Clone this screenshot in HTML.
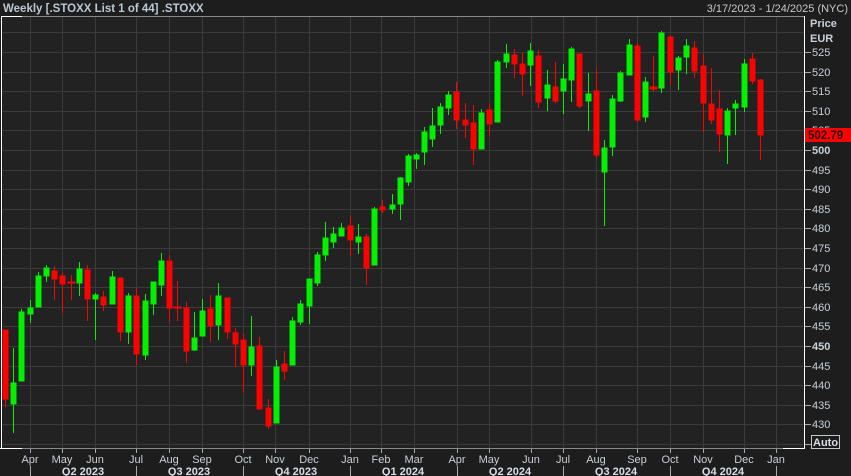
<!DOCTYPE html>
<html><head><meta charset="utf-8"><style>
html,body{margin:0;padding:0;background:#1d1d1d;width:851px;height:476px;overflow:hidden}
svg{display:block;font-family:"Liberation Sans",Arial,sans-serif}
</style></head><body>
<svg width="851" height="476" viewBox="0 0 851 476">
<rect x="0" y="0" width="851" height="476" fill="#1d1d1d"/>
<rect x="1" y="16" width="804" height="432" fill="#222222"/>
<g stroke="#3b3b3b" stroke-width="1">
<line x1="1" x2="804" y1="32.5" y2="32.5"/><line x1="1" x2="804" y1="52.5" y2="52.5"/><line x1="1" x2="804" y1="72.5" y2="72.5"/><line x1="1" x2="804" y1="91.5" y2="91.5"/><line x1="1" x2="804" y1="111.5" y2="111.5"/><line x1="1" x2="804" y1="130.5" y2="130.5"/><line x1="1" x2="804" y1="150.5" y2="150.5"/><line x1="1" x2="804" y1="170.5" y2="170.5"/><line x1="1" x2="804" y1="189.5" y2="189.5"/><line x1="1" x2="804" y1="209.5" y2="209.5"/><line x1="1" x2="804" y1="228.5" y2="228.5"/><line x1="1" x2="804" y1="248.5" y2="248.5"/><line x1="1" x2="804" y1="268.5" y2="268.5"/><line x1="1" x2="804" y1="287.5" y2="287.5"/><line x1="1" x2="804" y1="307.5" y2="307.5"/><line x1="1" x2="804" y1="326.5" y2="326.5"/><line x1="1" x2="804" y1="346.5" y2="346.5"/><line x1="1" x2="804" y1="366.5" y2="366.5"/><line x1="1" x2="804" y1="385.5" y2="385.5"/><line x1="1" x2="804" y1="405.5" y2="405.5"/><line x1="1" x2="804" y1="424.5" y2="424.5"/><line x1="1" x2="804" y1="444.5" y2="444.5"/>
<line y1="16" y2="448" x1="30.5" x2="30.5"/><line y1="16" y2="448" x1="62.5" x2="62.5"/><line y1="16" y2="448" x1="95.5" x2="95.5"/><line y1="16" y2="448" x1="136.5" x2="136.5"/><line y1="16" y2="448" x1="169.5" x2="169.5"/><line y1="16" y2="448" x1="202.5" x2="202.5"/><line y1="16" y2="448" x1="243.5" x2="243.5"/><line y1="16" y2="448" x1="275.5" x2="275.5"/><line y1="16" y2="448" x1="309.5" x2="309.5"/><line y1="16" y2="448" x1="350.5" x2="350.5"/><line y1="16" y2="448" x1="381.5" x2="381.5"/><line y1="16" y2="448" x1="414.5" x2="414.5"/><line y1="16" y2="448" x1="457.5" x2="457.5"/><line y1="16" y2="448" x1="489.5" x2="489.5"/><line y1="16" y2="448" x1="531.5" x2="531.5"/><line y1="16" y2="448" x1="563.5" x2="563.5"/><line y1="16" y2="448" x1="596.5" x2="596.5"/><line y1="16" y2="448" x1="637.5" x2="637.5"/><line y1="16" y2="448" x1="670.5" x2="670.5"/><line y1="16" y2="448" x1="703.5" x2="703.5"/><line y1="16" y2="448" x1="744.5" x2="744.5"/><line y1="16" y2="448" x1="776.5" x2="776.5"/>
</g>
<!-- borders -->
<line x1="1" x2="805" y1="16.5" y2="16.5" stroke="#8a8a8a"/>
<line x1="1" x2="805" y1="448.5" y2="448.5" stroke="#8a8a8a"/>
<line x1="1" x2="22" y1="16.5" y2="16.5" stroke="#fff"/>
<line x1="0" x2="22" y1="448.5" y2="448.5" stroke="#fff"/>
<line x1="783" x2="805" y1="448.5" y2="448.5" stroke="#fff"/>
<line x1="1.5" x2="1.5" y1="16" y2="449" stroke="#fff"/>
<line x1="804.5" x2="804.5" y1="16" y2="449" stroke="#fff"/>
<g stroke-width="1">
<g fill="#ff0000" stroke="#ff0000">
<line x1="5.5" x2="5.5" y1="330" y2="407"/><rect x="3" y="330" width="5" height="69"/>
<line x1="54.5" x2="54.5" y1="266" y2="300"/><rect x="52" y="271" width="5" height="8"/>
<line x1="62.5" x2="62.5" y1="273" y2="313"/><rect x="60" y="276" width="5" height="8"/>
<line x1="71.5" x2="71.5" y1="275" y2="300"/><rect x="68" y="282" width="7" height="1"/>
<line x1="87.5" x2="87.5" y1="265" y2="321"/><rect x="85" y="270" width="5" height="29"/>
<line x1="103.5" x2="103.5" y1="291" y2="311"/><rect x="101" y="297" width="5" height="8"/>
<line x1="120.5" x2="120.5" y1="278" y2="341"/><rect x="118" y="278" width="5" height="54"/>
<line x1="136.5" x2="136.5" y1="288" y2="365"/><rect x="134" y="296" width="5" height="58"/>
<line x1="169.5" x2="169.5" y1="255" y2="322"/><rect x="167" y="261" width="5" height="47"/>
<line x1="177.5" x2="177.5" y1="281" y2="321"/><rect x="174" y="307" width="7" height="1"/>
<line x1="186.5" x2="186.5" y1="302" y2="363"/><rect x="184" y="308" width="5" height="43"/>
<line x1="210.5" x2="210.5" y1="295" y2="342"/><rect x="208" y="309" width="5" height="17"/>
<line x1="227.5" x2="227.5" y1="298" y2="339"/><rect x="225" y="298" width="5" height="34"/>
<line x1="235.5" x2="235.5" y1="328" y2="367"/><rect x="233" y="333" width="5" height="11"/>
<line x1="243.5" x2="243.5" y1="334" y2="392"/><rect x="241" y="340" width="5" height="25"/>
<line x1="259.5" x2="259.5" y1="337" y2="409"/><rect x="257" y="346" width="5" height="63"/>
<line x1="268.5" x2="268.5" y1="399" y2="429"/><rect x="266" y="408" width="5" height="18"/>
<line x1="284.5" x2="284.5" y1="351" y2="380"/><rect x="282" y="364" width="5" height="7"/>
<line x1="350.5" x2="350.5" y1="216" y2="256"/><rect x="348" y="226" width="5" height="14"/>
<line x1="366.5" x2="366.5" y1="234" y2="285"/><rect x="364" y="237" width="5" height="31"/>
<line x1="382.5" x2="382.5" y1="200" y2="213"/><rect x="380" y="207" width="5" height="3"/>
<line x1="456.5" x2="456.5" y1="82" y2="129"/><rect x="454" y="92" width="5" height="28"/>
<line x1="465.5" x2="465.5" y1="103" y2="138"/><rect x="463" y="120" width="5" height="5"/>
<line x1="473.5" x2="473.5" y1="105" y2="165"/><rect x="471" y="123" width="5" height="26"/>
<line x1="489.5" x2="489.5" y1="104" y2="136"/><rect x="487" y="110" width="5" height="14"/>
<line x1="514.5" x2="514.5" y1="49" y2="78"/><rect x="512" y="55" width="5" height="9"/>
<line x1="522.5" x2="522.5" y1="53" y2="96"/><rect x="520" y="64" width="5" height="10"/>
<line x1="538.5" x2="538.5" y1="50" y2="108"/><rect x="536" y="56" width="5" height="46"/>
<line x1="555.5" x2="555.5" y1="62" y2="103"/><rect x="553" y="87" width="5" height="14"/>
<line x1="579.5" x2="579.5" y1="54" y2="108"/><rect x="577" y="54" width="5" height="52"/>
<line x1="596.5" x2="596.5" y1="68" y2="158"/><rect x="594" y="91" width="5" height="64"/>
<line x1="637.5" x2="637.5" y1="43" y2="122"/><rect x="635" y="46" width="5" height="74"/>
<line x1="653.5" x2="653.5" y1="56" y2="91"/><rect x="650" y="87" width="7" height="2"/>
<line x1="670.5" x2="670.5" y1="35" y2="85"/><rect x="668" y="37" width="5" height="35"/>
<line x1="694.5" x2="694.5" y1="41" y2="78"/><rect x="692" y="48" width="5" height="23"/>
<line x1="703.5" x2="703.5" y1="54" y2="132"/><rect x="701" y="66" width="5" height="37"/>
<line x1="711.5" x2="711.5" y1="68" y2="124"/><rect x="709" y="104" width="5" height="16"/>
<line x1="719.5" x2="719.5" y1="90" y2="152"/><rect x="717" y="109" width="5" height="25"/>
<line x1="752.5" x2="752.5" y1="53" y2="84"/><rect x="750" y="59" width="5" height="22"/>
<line x1="760.5" x2="760.5" y1="79" y2="160"/><rect x="758" y="80" width="5" height="55"/>
</g>
<g fill="#00f000" stroke="#00f000">
<line x1="13.5" x2="13.5" y1="348" y2="433"/><rect x="11" y="383" width="5" height="21"/>
<line x1="21.5" x2="21.5" y1="309" y2="381"/><rect x="19" y="312" width="5" height="69"/>
<line x1="30.5" x2="30.5" y1="300" y2="323"/><rect x="28" y="308" width="5" height="6"/>
<line x1="38.5" x2="38.5" y1="272" y2="307"/><rect x="36" y="276" width="5" height="31"/>
<line x1="46.5" x2="46.5" y1="265" y2="282"/><rect x="44" y="268" width="5" height="8"/>
<line x1="79.5" x2="79.5" y1="262" y2="296"/><rect x="77" y="269" width="5" height="14"/>
<line x1="95.5" x2="95.5" y1="293" y2="340"/><rect x="93" y="295" width="5" height="4"/>
<line x1="112.5" x2="112.5" y1="271" y2="304"/><rect x="110" y="277" width="5" height="27"/>
<line x1="128.5" x2="128.5" y1="293" y2="344"/><rect x="126" y="296" width="5" height="36"/>
<line x1="145.5" x2="145.5" y1="294" y2="360"/><rect x="143" y="301" width="5" height="54"/>
<line x1="153.5" x2="153.5" y1="282" y2="315"/><rect x="151" y="282" width="5" height="22"/>
<line x1="161.5" x2="161.5" y1="253" y2="296"/><rect x="159" y="261" width="5" height="24"/>
<line x1="194.5" x2="194.5" y1="312" y2="351"/><rect x="192" y="338" width="5" height="12"/>
<line x1="202.5" x2="202.5" y1="299" y2="336"/><rect x="200" y="311" width="5" height="25"/>
<line x1="218.5" x2="218.5" y1="283" y2="340"/><rect x="216" y="296" width="5" height="29"/>
<line x1="251.5" x2="251.5" y1="316" y2="376"/><rect x="249" y="347" width="5" height="18"/>
<line x1="276.5" x2="276.5" y1="360" y2="423"/><rect x="274" y="367" width="5" height="56"/>
<line x1="292.5" x2="292.5" y1="317" y2="365"/><rect x="290" y="321" width="5" height="44"/>
<line x1="300.5" x2="300.5" y1="300" y2="325"/><rect x="298" y="304" width="5" height="18"/>
<line x1="309.5" x2="309.5" y1="279" y2="324"/><rect x="307" y="279" width="5" height="27"/>
<line x1="317.5" x2="317.5" y1="252" y2="286"/><rect x="315" y="255" width="5" height="28"/>
<line x1="325.5" x2="325.5" y1="222" y2="261"/><rect x="323" y="238" width="5" height="17"/>
<line x1="333.5" x2="333.5" y1="227" y2="248"/><rect x="331" y="234" width="5" height="8"/>
<line x1="341.5" x2="341.5" y1="223" y2="236"/><rect x="339" y="228" width="5" height="8"/>
<line x1="358.5" x2="358.5" y1="224" y2="254"/><rect x="356" y="237" width="5" height="5"/>
<line x1="374.5" x2="374.5" y1="207" y2="265"/><rect x="372" y="209" width="5" height="56"/>
<line x1="392.5" x2="392.5" y1="194" y2="214"/><rect x="390" y="205" width="5" height="4"/>
<line x1="400.5" x2="400.5" y1="177" y2="220"/><rect x="398" y="178" width="5" height="26"/>
<line x1="408.5" x2="408.5" y1="154" y2="186"/><rect x="406" y="156" width="5" height="26"/>
<line x1="416.5" x2="416.5" y1="153" y2="169"/><rect x="414" y="155" width="5" height="4"/>
<line x1="424.5" x2="424.5" y1="127" y2="165"/><rect x="422" y="132" width="5" height="20"/>
<line x1="432.5" x2="432.5" y1="108" y2="147"/><rect x="430" y="126" width="5" height="13"/>
<line x1="440.5" x2="440.5" y1="103" y2="134"/><rect x="438" y="107" width="5" height="18"/>
<line x1="448.5" x2="448.5" y1="91" y2="115"/><rect x="446" y="95" width="5" height="13"/>
<line x1="481.5" x2="481.5" y1="109" y2="149"/><rect x="479" y="113" width="5" height="36"/>
<line x1="497.5" x2="497.5" y1="60" y2="122"/><rect x="495" y="62" width="5" height="60"/>
<line x1="506.5" x2="506.5" y1="44" y2="68"/><rect x="504" y="54" width="5" height="8"/>
<line x1="530.5" x2="530.5" y1="43" y2="86"/><rect x="528" y="51" width="5" height="14"/>
<line x1="547.5" x2="547.5" y1="70" y2="111"/><rect x="545" y="85" width="5" height="13"/>
<line x1="563.5" x2="563.5" y1="64" y2="114"/><rect x="561" y="79" width="5" height="12"/>
<line x1="571.5" x2="571.5" y1="47" y2="102"/><rect x="569" y="49" width="5" height="31"/>
<line x1="588.5" x2="588.5" y1="73" y2="131"/><rect x="586" y="94" width="5" height="7"/>
<line x1="604.5" x2="604.5" y1="140" y2="226"/><rect x="602" y="148" width="5" height="24"/>
<line x1="612.5" x2="612.5" y1="95" y2="156"/><rect x="610" y="99" width="5" height="48"/>
<line x1="620.5" x2="620.5" y1="71" y2="102"/><rect x="618" y="73" width="5" height="28"/>
<line x1="629.5" x2="629.5" y1="39" y2="75"/><rect x="627" y="45" width="5" height="30"/>
<line x1="645.5" x2="645.5" y1="77" y2="122"/><rect x="643" y="82" width="5" height="35"/>
<line x1="661.5" x2="661.5" y1="31" y2="93"/><rect x="659" y="33" width="5" height="55"/>
<line x1="678.5" x2="678.5" y1="56" y2="90"/><rect x="676" y="58" width="5" height="12"/>
<line x1="686.5" x2="686.5" y1="39" y2="74"/><rect x="684" y="46" width="5" height="11"/>
<line x1="727.5" x2="727.5" y1="108" y2="164"/><rect x="725" y="111" width="5" height="24"/>
<line x1="735.5" x2="735.5" y1="100" y2="135"/><rect x="733" y="104" width="5" height="4"/>
<line x1="744.5" x2="744.5" y1="59" y2="112"/><rect x="742" y="64" width="5" height="43"/>
</g>
</g>
<!-- header -->
<text x="3" y="12" font-size="11.5" font-weight="bold" fill="#b9c7d6">Weekly [.STOXX List 1 of 44] .STOXX</text>
<text x="848" y="12" font-size="11" fill="#c8c8c8" text-anchor="end">3/17/2023 - 1/24/2025 (NYC)</text>
<!-- right axis -->
<g font-size="11" fill="#c8d0d8">
<text x="810" y="27" font-weight="bold">Price</text>
<text x="810" y="42" font-weight="bold">EUR</text>
</g>
<g stroke="#aaa">
<line x1="805" x2="811" y1="52.5" y2="52.5"/><line x1="805" x2="811" y1="72.5" y2="72.5"/><line x1="805" x2="811" y1="91.5" y2="91.5"/><line x1="805" x2="811" y1="111.5" y2="111.5"/><line x1="805" x2="811" y1="130.5" y2="130.5"/><line x1="805" x2="811" y1="150.5" y2="150.5"/><line x1="805" x2="811" y1="170.5" y2="170.5"/><line x1="805" x2="811" y1="189.5" y2="189.5"/><line x1="805" x2="811" y1="209.5" y2="209.5"/><line x1="805" x2="811" y1="228.5" y2="228.5"/><line x1="805" x2="811" y1="248.5" y2="248.5"/><line x1="805" x2="811" y1="268.5" y2="268.5"/><line x1="805" x2="811" y1="287.5" y2="287.5"/><line x1="805" x2="811" y1="307.5" y2="307.5"/><line x1="805" x2="811" y1="326.5" y2="326.5"/><line x1="805" x2="811" y1="346.5" y2="346.5"/><line x1="805" x2="811" y1="366.5" y2="366.5"/><line x1="805" x2="811" y1="385.5" y2="385.5"/><line x1="805" x2="811" y1="405.5" y2="405.5"/><line x1="805" x2="811" y1="424.5" y2="424.5"/><line x1="805" x2="811" y1="444.5" y2="444.5"/>
</g>
<g font-size="11" fill="#c8d0d8">
<text x="812" y="56">525</text><text x="812" y="76">520</text><text x="812" y="95">515</text><text x="812" y="115">510</text><text x="812" y="134">505</text>
<text x="812" y="154" font-weight="bold">500</text><text x="812" y="174">495</text><text x="812" y="193">490</text><text x="812" y="213">485</text><text x="812" y="232">480</text><text x="812" y="252">475</text><text x="812" y="272">470</text><text x="812" y="291">465</text><text x="812" y="311">460</text><text x="812" y="330">455</text>
<text x="812" y="350" font-weight="bold">450</text><text x="812" y="370">445</text><text x="812" y="389">440</text><text x="812" y="409">435</text><text x="812" y="428">430</text>
</g>
<rect x="805" y="128" width="46" height="14" fill="#ff0000"/>
<text x="808" y="139" font-size="11.5" font-weight="bold" fill="#2a0000">502.79</text>
<rect x="811.5" y="435.5" width="28" height="13" fill="none" stroke="#c8c8c8"/>
<text x="813" y="446" font-size="11" font-weight="bold" fill="#d8dde8">Auto</text>
<!-- bottom axis -->
<g stroke="#aaa">
<line x1="30.5" x2="30.5" y1="449" y2="453"/><line x1="62.5" x2="62.5" y1="449" y2="453"/><line x1="95.5" x2="95.5" y1="449" y2="453"/><line x1="136.5" x2="136.5" y1="449" y2="453"/><line x1="169.5" x2="169.5" y1="449" y2="453"/><line x1="202.5" x2="202.5" y1="449" y2="453"/><line x1="243.5" x2="243.5" y1="449" y2="453"/><line x1="275.5" x2="275.5" y1="449" y2="453"/><line x1="309.5" x2="309.5" y1="449" y2="453"/><line x1="350.5" x2="350.5" y1="449" y2="453"/><line x1="381.5" x2="381.5" y1="449" y2="453"/><line x1="414.5" x2="414.5" y1="449" y2="453"/><line x1="457.5" x2="457.5" y1="449" y2="453"/><line x1="489.5" x2="489.5" y1="449" y2="453"/><line x1="531.5" x2="531.5" y1="449" y2="453"/><line x1="563.5" x2="563.5" y1="449" y2="453"/><line x1="596.5" x2="596.5" y1="449" y2="453"/><line x1="637.5" x2="637.5" y1="449" y2="453"/><line x1="670.5" x2="670.5" y1="449" y2="453"/><line x1="703.5" x2="703.5" y1="449" y2="453"/><line x1="744.5" x2="744.5" y1="449" y2="453"/><line x1="776.5" x2="776.5" y1="449" y2="453"/>
<line x1="30.5" x2="30.5" y1="466" y2="476"/><line x1="136.5" x2="136.5" y1="466" y2="476"/><line x1="243.5" x2="243.5" y1="466" y2="476"/><line x1="350.5" x2="350.5" y1="466" y2="476"/><line x1="457.5" x2="457.5" y1="466" y2="476"/><line x1="563.5" x2="563.5" y1="466" y2="476"/><line x1="670.5" x2="670.5" y1="466" y2="476"/><line x1="776.5" x2="776.5" y1="466" y2="476"/>
</g>
<g font-size="11" fill="#c8d0d8" text-anchor="middle">
<text x="30" y="463">Apr</text><text x="62" y="463">May</text><text x="95" y="463">Jun</text><text x="136" y="463">Jul</text><text x="169" y="463">Aug</text><text x="202" y="463">Sep</text><text x="243" y="463">Oct</text><text x="275" y="463">Nov</text><text x="309" y="463">Dec</text><text x="350" y="463">Jan</text><text x="381" y="463">Feb</text><text x="414" y="463">Mar</text><text x="457" y="463">Apr</text><text x="489" y="463">May</text><text x="531" y="463">Jun</text><text x="563" y="463">Jul</text><text x="596" y="463">Aug</text><text x="637" y="463">Sep</text><text x="670" y="463">Oct</text><text x="703" y="463">Nov</text><text x="744" y="463">Dec</text><text x="776" y="463">Jan</text>
</g>
<g font-size="11" font-weight="bold" fill="#d8dde8" text-anchor="middle">
<text x="83" y="475">Q2 2023</text><text x="189" y="475">Q3 2023</text><text x="296" y="475">Q4 2023</text><text x="403" y="475">Q1 2024</text><text x="510" y="475">Q2 2024</text><text x="616" y="475">Q3 2024</text><text x="723" y="475">Q4 2024</text>
</g>
</svg>
</body></html>
